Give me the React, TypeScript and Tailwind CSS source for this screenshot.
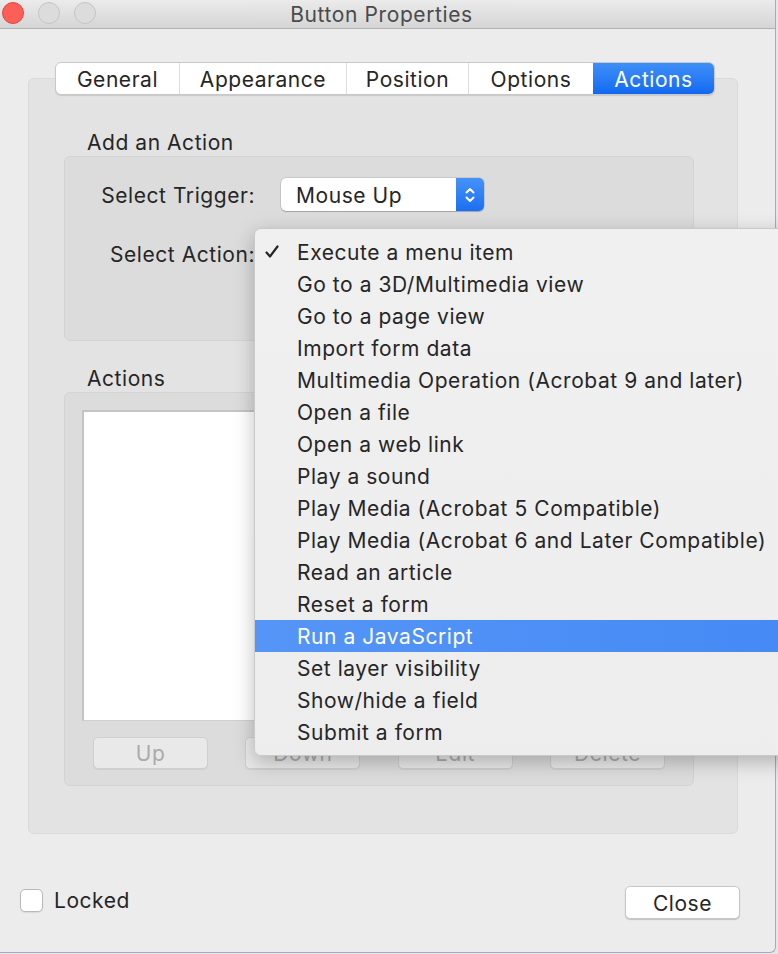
import React from "react";

const font = { fontFamily: "Inter, 'Noto Sans', 'Liberation Sans', sans-serif" };

const menuItems = [
  "Execute a menu item",
  "Go to a 3D/Multimedia view",
  "Go to a page view",
  "Import form data",
  "Multimedia Operation (Acrobat 9 and later)",
  "Open a file",
  "Open a web link",
  "Play a sound",
  "Play Media (Acrobat 5 Compatible)",
  "Play Media (Acrobat 6 and Later Compatible)",
  "Read an article",
  "Reset a form",
  "Run a JavaScript",
  "Set layer visibility",
  "Show/hide a field",
  "Submit a form",
];

const tabs = [
  { label: "General", w: "w-[123px]" },
  { label: "Appearance", w: "w-[167px]" },
  { label: "Position", w: "w-[122px]" },
  { label: "Options", w: "w-[125px]" },
  { label: "Actions", w: "w-[121px]" },
];

const txt = "text-[21px] tracking-[0.55px]";

function DisabledButton({ label }: { label: string }) {
  return (
    <div className={`w-[115px] h-[32px] pt-[2px] rounded-[5px] border border-[#cfcfcf] bg-[#e9e9e9] shadow-[0_1px_0_rgba(0,0,0,0.06)] flex items-center justify-center ${txt} text-[#ababab]`}>
      {label}
    </div>
  );
}

export default function App() {
  return (
    <div className="relative w-[778px] h-[954px] overflow-hidden bg-[#e6e6ea] text-[#262626]" style={font}>
      <div className="w-[776px] h-[953px] bg-[#ececec] border-r border-b border-[#a9a9bd] rounded-br-[6px] flex flex-col">
        {/* title bar */}
        <div className="relative h-[29px] shrink-0 bg-gradient-to-b from-[#ebebeb] to-[#d5d5d5] border-b border-[#b3b3b3] flex items-center justify-center">
          <div className="absolute left-[2px] top-[2px] flex gap-[14px]">
            <div className="w-[22px] h-[22px] rounded-full bg-[#fc5f57] border border-[#e2463f]" />
            <div className="w-[22px] h-[22px] rounded-full bg-[#dcdcdc] border border-[#c5c5c5]" />
            <div className="w-[22px] h-[22px] rounded-full bg-[#dcdcdc] border border-[#c5c5c5]" />
          </div>
          <span className="text-[21px] tracking-[0.6px] text-[#4a4a4a] leading-none -ml-[12px]">Button Properties</span>
        </div>

        {/* body */}
        <div className="flex-1 flex flex-col">
          <div className="pt-[33px] flex flex-col items-start">
            {/* tabs */}
            <div className="relative z-10 ml-[55px] flex h-[33px] rounded-[6px] bg-white border border-[#c8c8c8] shadow-[0_1px_1px_rgba(0,0,0,0.12)] overflow-hidden">
              {tabs.map((t, i) => {
                const active = t.label === "Actions";
                return (
                  <div
                    key={t.label}
                    className={`${t.w} pt-[3px] flex items-center justify-center ${txt} ${
                      active
                        ? "bg-gradient-to-b from-[#3f8ff8] to-[#1169f0] text-white"
                        : "text-[#262626]"
                    } ${i > 0 && !active ? "border-l border-[#dedede]" : ""}`}
                  >
                    {t.label}
                  </div>
                );
              })}
            </div>

            {/* tab panel */}
            <div className="-mt-[17px] ml-[28px] w-[710px] h-[756px] rounded-[6px] bg-[#e3e3e3] border border-[#dadada] pt-[51px] pl-[35px]">
              <div className={`pl-[23px] h-[24px] leading-[24px] pt-[1px] ${txt}`}>Add an Action</div>
              <div className="mt-[2px] w-[630px] h-[185px] rounded-[6px] bg-[#dcdcdc] border border-[#d4d4d4] pt-[21px]">
                <div className="flex items-center h-[33px]">
                  <div className={`w-[190px] text-right pt-[3px] ${txt}`}>Select Trigger:</div>
                  <div className="ml-[26px] w-[203px] h-[33px] rounded-[5px] bg-white shadow-[0_0_0_0.5px_rgba(0,0,0,0.18),0_1px_1px_rgba(0,0,0,0.18)] flex overflow-hidden">
                    <div className={`flex-1 flex items-center pl-[15px] pt-[2px] ${txt}`}>Mouse Up</div>
                    <div className="w-[28px] bg-gradient-to-b from-[#4592f8] to-[#1a6ff1] flex items-center justify-center">
                      <svg width="12" height="20" viewBox="0 0 12 20" fill="none" stroke="white" strokeWidth="2" strokeLinecap="round" strokeLinejoin="round">
                        <path d="M2.5 7.5 L6 4 L9.5 7.5" />
                        <path d="M2.5 12.5 L6 16 L9.5 12.5" />
                      </svg>
                    </div>
                  </div>
                </div>
                <div className="flex items-center h-[33px] mt-[27px]">
                  <div className={`w-[190px] text-right pt-[1px] ${txt}`}>Select Action:</div>
                </div>
              </div>

              <div className={`mt-[25px] pl-[23px] h-[24px] leading-[24px] pt-[1px] ${txt}`}>Actions</div>
              <div className="mt-[2px] w-[630px] h-[394px] rounded-[6px] bg-[#dcdcdc] border border-[#d4d4d4] pt-[17px] px-[17px] flex flex-col">
                <div className="w-[594px] h-[311px] bg-white border-t-[2px] border-l-[2px] border-[#c4c4c4] border-r border-b border-r-[#d0d0d0] border-b-[#d0d0d0]" />
                <div className="mt-[16px] px-[11px] flex justify-between">
                  <DisabledButton label="Up" />
                  <DisabledButton label="Down" />
                  <DisabledButton label="Edit" />
                  <DisabledButton label="Delete" />
                </div>
              </div>
            </div>
          </div>

          {/* footer */}
          <div className="flex items-center justify-between mt-[48px] pl-[20px] pr-[35px]">
            <div className="flex items-center gap-[11px]">
              <div className="w-[23px] h-[23px] rounded-[5px] bg-white border border-[#b9b9b9] shadow-[0_1px_1px_rgba(0,0,0,0.08)]" />
              <span className={`${txt} pt-[1px]`}>Locked</span>
            </div>
            <div className={`mt-[4px] w-[115px] h-[33px] pt-[2px] rounded-[5px] bg-white border border-[#c6c6c6] shadow-[0_1px_1px_rgba(0,0,0,0.18)] flex items-center justify-center ${txt}`}>
              Close
            </div>
          </div>
        </div>
      </div>

      {/* popup menu */}
      <div className="absolute left-[254px] top-[228px] w-[560px] h-[528px] rounded-[7px] bg-gradient-to-b from-[#f0f0f0] to-[#ededed] border border-[#c9c9c9] shadow-[0_6px_20px_rgba(0,0,0,0.25)] py-[7px]">
        {menuItems.map((item, i) => {
          const hi = item === "Run a JavaScript";
          return (
            <div
              key={item}
              className={`relative h-[32px] pt-[2px] flex items-center pl-[42px] ${txt} whitespace-nowrap ${
                hi ? "bg-gradient-to-r from-[#5595f7] to-[#4489f5] text-white" : "text-[#262626]"
              }`}
            >
              {i === 0 && (
                <svg className="absolute left-[10px] top-[9px]" width="14" height="14" viewBox="0 0 14 14" fill="none" stroke="#262626" strokeWidth="2.2" strokeLinecap="round" strokeLinejoin="round">
                  <path d="M1.5 7.5 L5 11.5 L12.5 1.5" />
                </svg>
              )}
              {item}
            </div>
          );
        })}
      </div>
    </div>
  );
}
